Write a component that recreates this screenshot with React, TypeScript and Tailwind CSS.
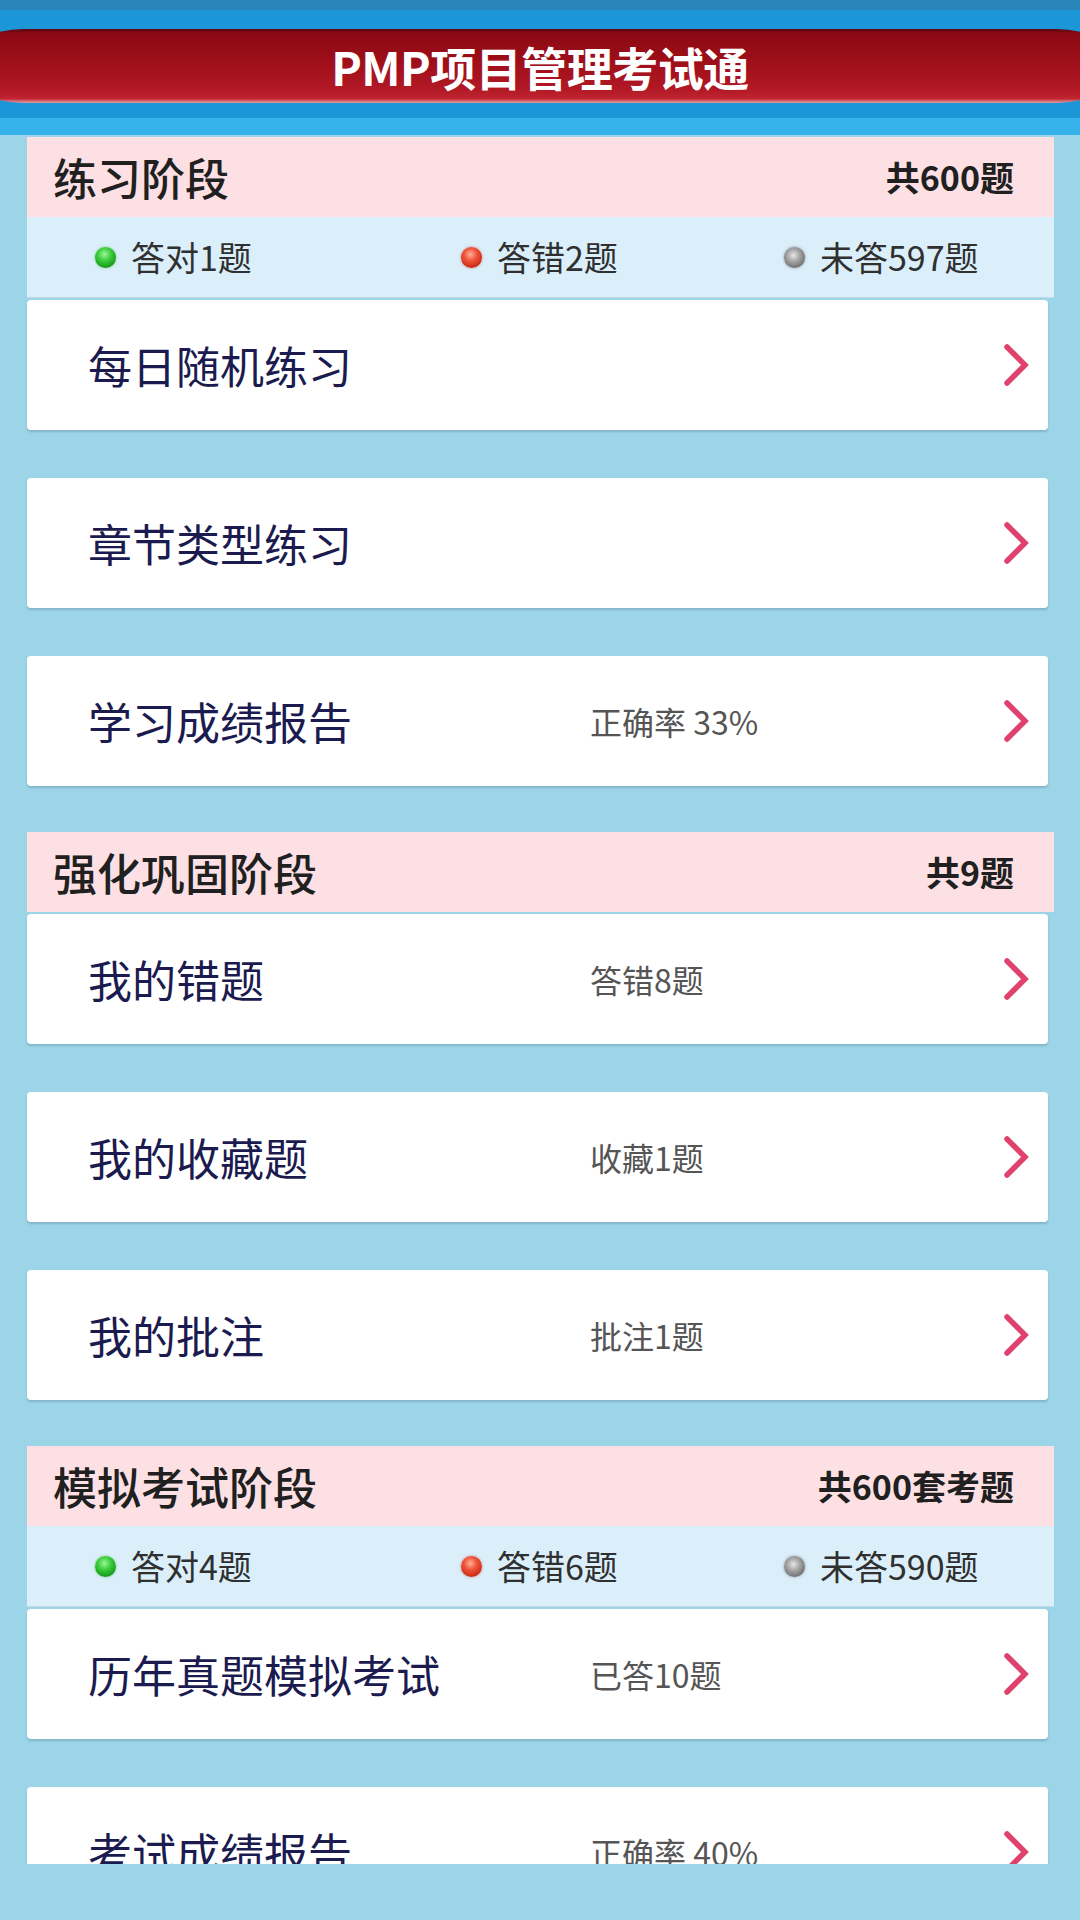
type Stat = { color: 'green' | 'red' | 'gray'; text: string }
type Item = { title: string; note?: string }
type Section = { title: string; total: string; stats?: Stat[]; items: Item[] }

const sections: Section[] = [
  {
    title: '练习阶段',
    total: '共600题',
    stats: [
      { color: 'green', text: '答对1题' },
      { color: 'red', text: '答错2题' },
      { color: 'gray', text: '未答597题' },
    ],
    items: [
      { title: '每日随机练习' },
      { title: '章节类型练习' },
      { title: '学习成绩报告', note: '正确率 33%' },
    ],
  },
  {
    title: '强化巩固阶段',
    total: '共9题',
    items: [
      { title: '我的错题', note: '答错8题' },
      { title: '我的收藏题', note: '收藏1题' },
      { title: '我的批注', note: '批注1题' },
    ],
  },
  {
    title: '模拟考试阶段',
    total: '共600套考题',
    stats: [
      { color: 'green', text: '答对4题' },
      { color: 'red', text: '答错6题' },
      { color: 'gray', text: '未答590题' },
    ],
    items: [
      { title: '历年真题模拟考试', note: '已答10题' },
      { title: '考试成绩报告', note: '正确率 40%' },
    ],
  },
]

function Dot({ color }: { color: Stat['color'] }) {
  if (color === 'green')
    return (
      <span className="w-[21px] h-[21px] rounded-full shrink-0 bg-[radial-gradient(circle_at_45%_35%,#9cf59a_0%,#3fcf3f_35%,#129a18_75%,#0b6e10_100%)] shadow-[0_0_3px_rgba(60,180,60,0.6)]" />
    )
  if (color === 'red')
    return (
      <span className="w-[21px] h-[21px] rounded-full shrink-0 bg-[radial-gradient(circle_at_45%_35%,#ffb09a_0%,#f0553a_35%,#c82a14_75%,#8e1a0c_100%)] shadow-[0_0_3px_rgba(200,60,40,0.6)]" />
    )
  return (
    <span className="w-[21px] h-[21px] rounded-full shrink-0 bg-[radial-gradient(circle_at_45%_40%,#e6e6e6_0%,#a8a8a8_35%,#6e6e6e_75%,#4a4a4a_100%)] shadow-[0_0_3px_rgba(90,90,90,0.6)]" />
  )
}

function Chevron() {
  return (
    <svg width="30" height="46" viewBox="0 0 30 46" className="shrink-0">
      <path d="M7 5 L25 23 L7 41" fill="none" stroke="#df426d" strokeWidth="5.5" strokeLinecap="round" strokeLinejoin="miter" />
    </svg>
  )
}

function Card({ item, first }: { item: Item; first: boolean }) {
  return (
    <div
      className={`${first ? 'mt-[2px]' : 'mt-[48px]'} mr-[6px] h-[130px] bg-white rounded-[4px] shadow-[0_2px_2px_rgba(60,90,110,0.25)] flex items-center pl-[61px] pr-[18px]`}
    >
      <div className="w-[502px] text-[44px] leading-none text-[#1b1b4f] whitespace-nowrap">{item.title}</div>
      <div className="flex-1 text-[32px] leading-none text-[#555555] whitespace-nowrap">{item.note}</div>
      <Chevron />
    </div>
  )
}

export default function App() {
  return (
    <div className="w-[1080px] h-[1920px] overflow-hidden bg-[#9bd5e7] font-['Noto_Sans_CJK_SC','Noto_Sans',sans-serif]">
      {/* title bar */}
      <div className="h-[135px] flex flex-col">
        <div className="h-[10px] bg-[#2a85ba]" />
        <div className="h-[108px] bg-[#1d96d8] pt-[19px]">
          <div className="h-[74px] -mx-[40px] rounded-[64px/37px] bg-[linear-gradient(180deg,#5a0610_0%,#8c0a14_6%,#9c0e18_40%,#b01824_80%,#c02430_94%,#e0a0a8_100%)] flex items-center justify-center">
            <span className="text-[46px] font-bold text-white leading-none tracking-[-0.5px]">PMP项目管理考试通</span>
          </div>
        </div>
        <div className="h-[17px] bg-[#35b3ea]" />
      </div>

      {/* scroll content */}
      <div className="h-[1729px] overflow-hidden pl-[27px] pr-[26px] pt-[2px]">
        {sections.map((s, si) => (
          <div key={s.title} className={si === 0 ? '' : 'mt-[46px]'}>
            <div className="h-[80px] bg-[#fde0e4] flex items-center justify-between pl-[26px] pr-[40px]">
              <span className="text-[44px] font-medium leading-none text-[#202020]">{s.title}</span>
              <span className="text-[34px] font-bold leading-none text-[#202020]">{s.total}</span>
            </div>
            {s.stats && (
              <div className="h-[81px] bg-[#dbeffb] border-b border-[#c3d8e4] grid grid-cols-[366px_323px_1fr] items-center pl-[68px]">
                {s.stats.map((st) => (
                  <div key={st.text} className="flex items-center gap-[15px]">
                    <Dot color={st.color} />
                    <span className="text-[34px] leading-none text-[#303030]">{st.text}</span>
                  </div>
                ))}
              </div>
            )}
            {s.items.map((it, i) => (
              <Card key={it.title} item={it} first={i === 0} />
            ))}
          </div>
        ))}
      </div>
    </div>
  )
}
